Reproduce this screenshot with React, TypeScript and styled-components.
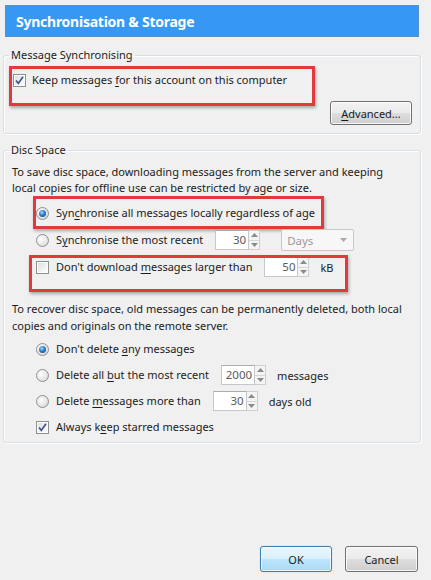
import React from 'react'
import styled, { createGlobalStyle, css } from 'styled-components'

const GlobalStyle = createGlobalStyle`
  html, body {
    margin: 0;
    padding: 0;
    background: #f0f0f0;
  }
  * {
    box-sizing: border-box;
  }
`

const Window = styled.div`
  width: 431px;
  height: 580px;
  display: flex;
  flex-direction: column;
  padding: 5px 10px 8px 3px;
  background: #f0f0f0;
  font-family: 'Noto Sans', 'Open Sans', sans-serif;
  font-size: 11px;
  color: #1b1b1b;
  overflow: hidden;
`

const TitleBar = styled.div`
  margin: 0 2px;
  height: 32px;
  display: flex;
  align-items: center;
  padding-left: 10px;
  background: #3798f4;
  border: 1px solid #5c8fc2;
  color: #fff;
  font-weight: 700;
  font-size: 14px;
  letter-spacing: -0.25px;
`

const Group = styled.fieldset<{ $top: number; $bottom: number }>`
  margin: ${({ $top }) => $top}px 0 0;
  padding: 0 8px ${({ $bottom }) => $bottom}px 8px;
  border: 1px solid #d5dfe5;
  border-radius: 3px;
  box-shadow: inset 1px 1px 0 #fff, 1px 1px 0 #fff;
  min-width: 0;
`

const Legend = styled.legend`
  padding: 0 2px;
  margin-left: -3px;
  line-height: 16px;
`

const Para = styled.p<{ $top: number; $lh: number }>`
  margin: ${({ $top }) => $top}px 0 0;
  white-space: nowrap;
  line-height: ${({ $lh }) => $lh}px;
`

const CheckRow = styled.div`
  position: relative;
  margin-top: 9px;
  padding-left: 1px;
  display: flex;
  align-items: center;
  height: 16px;
`

const ButtonRow = styled.div`
  display: flex;
  justify-content: flex-end;
  margin-top: 13px;
`

const OptionList = styled.div<{ $top: number; $gap: number }>`
  display: flex;
  flex-direction: column;
  gap: ${({ $gap }) => $gap}px;
  margin: ${({ $top }) => $top}px 0 0 24px;
`

const Option = styled.div`
  position: relative;
  height: 22px;
  display: flex;
  align-items: center;
`

const Label = styled.span`
  margin-left: 7px;
  margin-right: 12px;
  white-space: nowrap;
  line-height: 16px;
`

const Unit = styled.span`
  margin-left: 11px;
  white-space: nowrap;
`

const Key = styled.span`
  text-decoration: underline;
  text-underline-offset: 2px;
`

const Box = styled.span`
  width: 13px;
  height: 13px;
  flex: none;
  display: inline-flex;
  align-items: center;
  justify-content: center;
  border: 1px solid #8e8f8f;
  background: linear-gradient(135deg, #dcdcdc 0%, #f6f6f6 70%, #ffffff 100%);
  box-shadow: inset 0 0 0 1px #fdfdfd;
`

const Radio = styled.span<{ $on?: boolean }>`
  width: 13px;
  height: 13px;
  flex: none;
  border-radius: 50%;
  border: 1px solid #8e8f8f;
  background: radial-gradient(circle at 35% 35%, #ffffff 0%, #e4e4e4 60%, #cfcfcf 100%);
  display: inline-flex;
  align-items: center;
  justify-content: center;
  ${({ $on }) =>
    $on &&
    css`
      &::after {
        content: '';
        width: 7px;
        height: 7px;
        border-radius: 50%;
        background: radial-gradient(circle at 40% 35%, #9fdcff 0%, #2a7fcb 45%, #0c3f78 100%);
      }
    `}
`

const Highlight = styled.div<{ $t: number; $l: number; $w: number; $h: number }>`
  position: absolute;
  top: ${({ $t }) => $t}px;
  left: ${({ $l }) => $l}px;
  width: ${({ $w }) => $w}px;
  height: ${({ $h }) => $h}px;
  border: 3px solid #e2393d;
  box-shadow: 1px 2px 3px rgba(0, 0, 0, 0.3);
  pointer-events: none;
`

const Spin = styled.div`
  display: inline-flex;
  height: 20px;
  flex: none;
`

const SpinField = styled.div<{ $w: number }>`
  width: ${({ $w }) => $w}px;
  height: 100%;
  background: #fff;
  border: 1px solid #c4c8cd;
  border-top-color: #a9adb3;
  text-align: right;
  padding-right: 2px;
  line-height: 18px;
  color: #5a5a5a;
  font-size: 11.5px;
`

const SpinButtons = styled.div`
  width: 11px;
  height: 100%;
  display: flex;
  flex-direction: column;
  border: 1px solid #cfcfcf;
  border-left: none;
  background: #f4f4f4;
`

const SpinHalf = styled.div<{ $down?: boolean }>`
  flex: 1;
  display: flex;
  align-items: center;
  justify-content: center;
  border-top: ${({ $down }) => ($down ? '1px solid #d6d6d6' : 'none')};
`

const Select = styled.div`
  margin-left: 21px;
  width: 73px;
  height: 22px;
  display: flex;
  align-items: center;
  justify-content: space-between;
  padding: 0 6px 0 5px;
  border: 1px solid #c7c7c7;
  border-radius: 2px;
  background: #f7f7f7;
  color: #9a9a9a;
  font-size: 11.5px;
`

const PushButton = styled.button<{ $w: number; $h: number; $default?: boolean }>`
  width: ${({ $w }) => $w}px;
  height: ${({ $h }) => $h}px;
  padding: 0;
  font: inherit;
  color: #1b1b1b;
  border-radius: 3px;
  border: 1px solid #707070;
  background: linear-gradient(#f2f2f2 0%, #ebebeb 48%, #dddddd 52%, #cfcfcf 100%);
  box-shadow: inset 0 0 0 1px rgba(255, 255, 255, 0.8);
  ${({ $default }) =>
    $default &&
    css`
      border-color: #3c7fb1;
      background: linear-gradient(#eaf6fd 0%, #d9f0fc 48%, #bee6fd 52%, #a7d9f5 100%);
      box-shadow: inset 0 0 0 1px rgba(255, 255, 255, 0.7), 0 0 1px #6cc3ef;
    `}
`

const Footer = styled.div`
  margin-top: auto;
  display: flex;
  justify-content: flex-end;
  gap: 13px;
  padding-right: 3px;
`

function Tick() {
  return (
    <svg width="11" height="11" viewBox="0 0 11 11">
      <path d="M2 5.5 L4.3 8.4 L9 1.8" fill="none" stroke="#40538f" strokeWidth="1.7" />
    </svg>
  )
}

function Arrow({ down, color = '#8a8a8a' }: { down?: boolean; color?: string }) {
  return (
    <svg width="7" height="4" viewBox="0 0 7 4">
      <path d={down ? 'M0 0 L7 0 L3.5 4 Z' : 'M0 4 L7 4 L3.5 0 Z'} fill={color} />
    </svg>
  )
}

function SpinBox({ value, width }: { value: string; width: number }) {
  return (
    <Spin>
      <SpinField $w={width}>{value}</SpinField>
      <SpinButtons>
        <SpinHalf>
          <Arrow />
        </SpinHalf>
        <SpinHalf $down>
          <Arrow down />
        </SpinHalf>
      </SpinButtons>
    </Spin>
  )
}

export default function App() {
  return (
    <Window>
      <GlobalStyle />
      <TitleBar>Synchronisation &amp; Storage</TitleBar>

      <Group $top={10} $bottom={8}>
        <Legend>Message Synchronising</Legend>
        <CheckRow>
          <Box>
            <Tick />
          </Box>
          <Label style={{ marginLeft: 6 }}>
            Keep messages <Key>f</Key>or this account on this computer
          </Label>
          <Highlight $t={-6} $l={-3} $w={306} $h={40} />
        </CheckRow>
        <ButtonRow>
          <PushButton $w={82} $h={24}>
            <Key>A</Key>dvanced...
          </PushButton>
        </ButtonRow>
      </Group>

      <Group $top={8} $bottom={4}>
        <Legend>Disc Space</Legend>
        <Para $top={6} $lh={16}>
          To save disc space, downloading messages from the server and keeping
          <br />
          local copies for offline use can be restricted by age or size.
        </Para>
        <OptionList $top={6} $gap={5}>
          <Option>
            <Radio $on />
            <Label>
              Syn<Key>c</Key>hronise all messages locally regardless of age
            </Label>
            <Highlight $t={-6} $l={-3} $w={291} $h={33} />
          </Option>
          <Option>
            <Radio />
            <Label>
              S<Key>y</Key>nchronise the most recent
            </Label>
            <SpinBox value="30" width={34} />
            <Select>
              Days
              <Arrow down color="#a8a8a8" />
            </Select>
          </Option>
          <Option>
            <Box />
            <Label>
              Don't download <Key>m</Key>essages larger than
            </Label>
            <SpinBox value="50" width={34} />
            <Unit>kB</Unit>
            <Highlight $t={-1} $l={-7} $w={319} $h={37} />
          </Option>
        </OptionList>

        <Para $top={22} $lh={17}>
          To recover disc space, old messages can be permanently deleted, both local
          <br />
          copies and originals on the remote server.
        </Para>
        <OptionList $top={4} $gap={4}>
          <Option>
            <Radio $on />
            <Label>
              Don't delete <Key>a</Key>ny messages
            </Label>
          </Option>
          <Option>
            <Radio />
            <Label>
              Delete all <Key>b</Key>ut the most recent
            </Label>
            <SpinBox value="2000" width={34} />
            <Unit>messages</Unit>
          </Option>
          <Option>
            <Radio />
            <Label>
              Delete <Key>m</Key>essages more than
            </Label>
            <SpinBox value="30" width={34} />
            <Unit>days old</Unit>
          </Option>
          <Option>
            <Box>
              <Tick />
            </Box>
            <Label>
              Always k<Key>e</Key>ep starred messages
            </Label>
          </Option>
        </OptionList>
      </Group>

      <Footer>
        <PushButton $w={72} $h={26} $default>
          OK
        </PushButton>
        <PushButton $w={73} $h={26}>
          Cancel
        </PushButton>
      </Footer>
    </Window>
  )
}
